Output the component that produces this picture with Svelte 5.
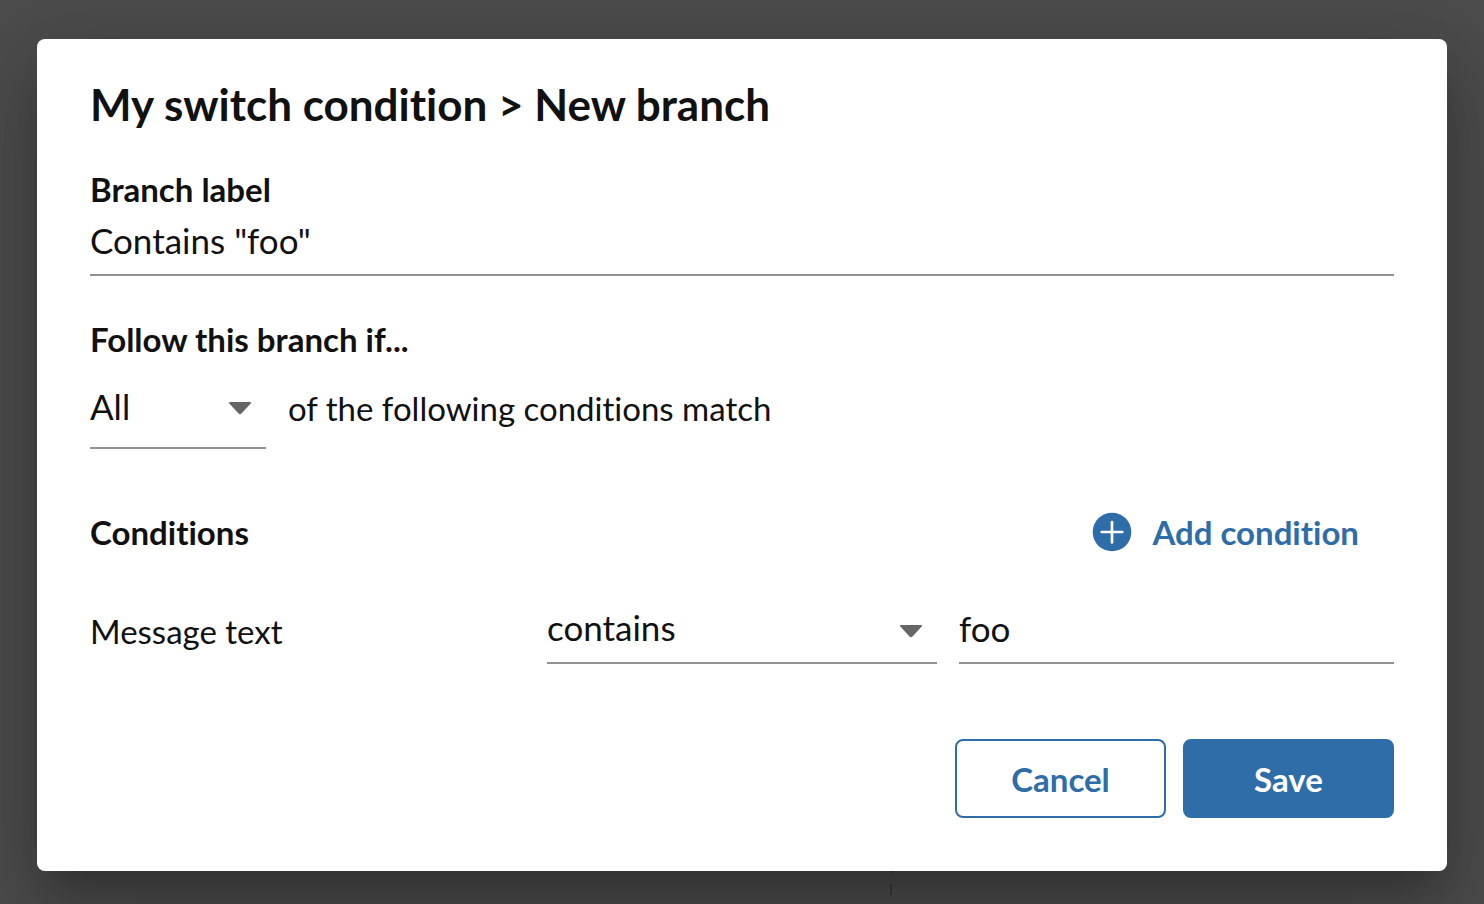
<script>
  let label = $state('Contains "foo"');
  let mode = $state('All');
  let operator = $state('contains');
  let value = $state('foo');
</script>

<div class="backdrop">
  <div class="connector" aria-hidden="true"></div>
  <form class="dialog" role="dialog" aria-labelledby="title" onsubmit={(e) => e.preventDefault()}>
    <h1 id="title">My switch condition &gt; New branch</h1>

    <label class="heading" for="branch-label">Branch label</label>
    <input id="branch-label" class="field" type="text" bind:value={label} />

    <label class="heading follow" for="mode">Follow this branch if...</label>
    <div class="match">
      <div class="select mode">
        <select id="mode" class="field" bind:value={mode}>
          <option>All</option>
          <option>Any</option>
        </select>
        <svg class="caret" viewBox="0 0 24 14" aria-hidden="true"><path d="M2 1h20q2 0 .7 1.6L13.5 12.6q-1.5 1.4-3 0L1.3 2.6Q0 1 2 1z" /></svg>
      </div>
      <span>of the following conditions match</span>
    </div>

    <div class="conditions">
      <h2 class="heading">Conditions</h2>
      <button class="add" type="button">
        <svg class="plus" viewBox="0 0 40 40" aria-hidden="true"><circle cx="20" cy="20" r="19.3" /><path d="M20 10v20.500M9.700 20h20.600" /></svg>
        Add condition
      </button>
    </div>

    <div class="condition">
      <label for="operator">Message text</label>
      <div class="select">
        <select id="operator" class="field" bind:value={operator}>
          <option>contains</option>
          <option>equals</option>
        </select>
        <svg class="caret" viewBox="0 0 24 14" aria-hidden="true"><path d="M2 1h20q2 0 .7 1.6L13.5 12.6q-1.5 1.4-3 0L1.3 2.6Q0 1 2 1z" /></svg>
      </div>
      <input class="field" type="text" aria-label="Value" bind:value />
    </div>

    <div class="actions">
      <button class="button" type="button">Cancel</button>
      <button class="button primary" type="submit">Save</button>
    </div>
  </form>
</div>

<style>
  :global(body) {
    background: #4c4c4c;
  }
  .backdrop {
    position: relative;
    box-sizing: border-box;
    min-height: 100vh;
    padding: 39px 37px 33px;
    overflow: hidden;
    background: #4c4c4c;
    font-family: Lato, sans-serif;
    font-size: 33px;
    line-height: 42px;
    font-variant-ligatures: none;
    color: #111;
  }
  /* Dashed canvas line that runs on behind the dialog. */
  .connector {
    position: absolute;
    left: 60%;
    bottom: 9px;
    width: 2px;
    height: 24px;
    background: repeating-linear-gradient(to top, #383838 0 11px, transparent 11px 22px);
  }
  .dialog {
    position: relative;
    display: flex;
    flex-direction: column;
    padding: 38px 53px 53px;
    border-radius: 8px;
    background: #fff;
    box-shadow:
      0 22px 30px -14px rgba(0, 0, 0, 0.2),
      0 48px 76px 6px rgba(0, 0, 0, 0.14),
      0 18px 92px 16px rgba(0, 0, 0, 0.12);
  }
  h1 {
    margin: 0 0 37px;
    font-size: 44px;
    line-height: 54px;
    font-weight: 700;
  }
  .heading {
    margin: 0;
    font-size: 33px;
    line-height: 42px;
    font-weight: 700;
  }
  .field {
    box-sizing: border-box;
    width: 100%;
    min-width: 0;
    height: 66px;
    margin: 0;
    padding: 0 0 4px;
    border: 0;
    border-bottom: 2px solid #919191;
    border-radius: 0;
    outline: 0;
    appearance: none;
    background: transparent;
    font: inherit;
    font-size: 35px;
    color: inherit;
  }
  .follow {
    margin-top: 42px;
  }
  .match {
    display: flex;
    align-items: center;
    gap: 22px;
    margin-top: 7px;
  }
  .select {
    position: relative;
    display: flex;
  }
  .select .field {
    padding-bottom: 6px;
  }
  .mode {
    width: 176px;
  }
  .mode .field {
    height: 82px;
    padding-bottom: 2px;
  }
  .caret {
    position: absolute;
    right: 14px;
    top: 50%;
    width: 24px;
    height: 14px;
    margin-top: -7px;
    fill: #666;
    pointer-events: none;
  }
  .conditions {
    display: flex;
    align-items: center;
    justify-content: space-between;
    margin-top: 62px;
    padding-right: 35px;
  }
  .add {
    display: flex;
    align-items: center;
    gap: 20px;
    padding: 0;
    border: 0;
    background: none;
    font: inherit;
    font-weight: 700;
    color: #2f6da8;
    cursor: pointer;
  }
  .plus {
    width: 40px;
    height: 40px;
    fill: #2f6da8;
  }
  .plus path {
    stroke: #fff;
    stroke-width: 2.7;
    stroke-linecap: round;
  }
  .condition {
    display: grid;
    grid-template-columns: 435fr 390fr 435fr;
    align-items: center;
    gap: 22px;
    margin-top: 45px;
  }
  .actions {
    display: flex;
    justify-content: flex-end;
    gap: 17px;
    margin-top: 75px;
  }
  .button {
    box-sizing: border-box;
    width: 211px;
    height: 79px;
    padding: 0;
    border: 2px solid #2f6da8;
    border-radius: 8px;
    background: #fff;
    font: inherit;
    font-size: 33px;
    font-weight: 700;
    color: #2f6da8;
    cursor: pointer;
  }
  .primary {
    background: #2f6da8;
    color: #fff;
  }
</style>
